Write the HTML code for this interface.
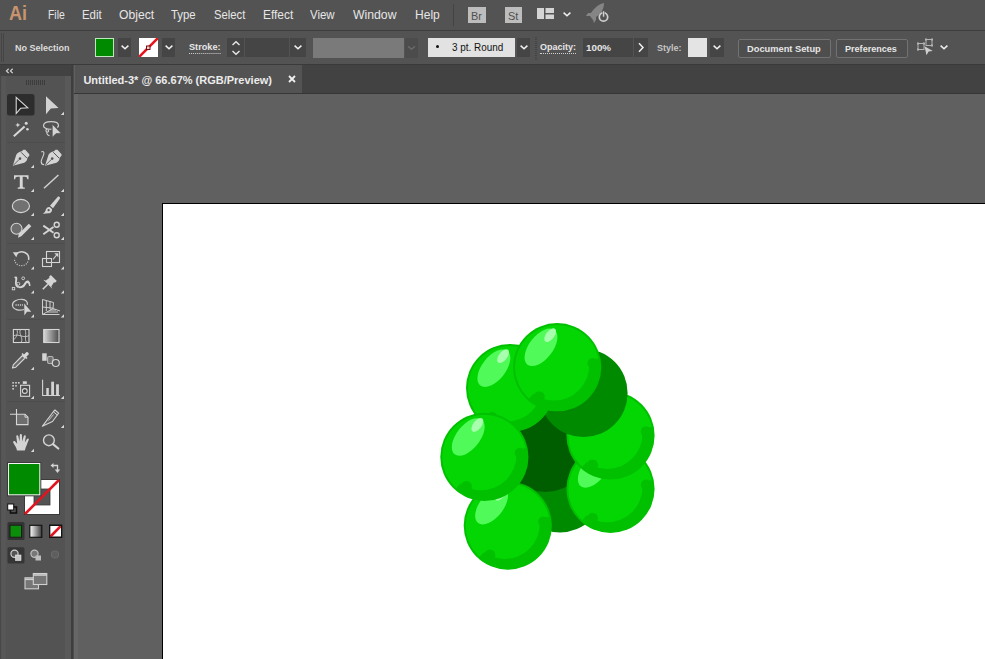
<!DOCTYPE html>
<html>
<head>
<meta charset="utf-8">
<title>Untitled-3* @ 66.67% (RGB/Preview)</title>
<style>
html,body{margin:0;padding:0;}
body{width:985px;height:659px;overflow:hidden;background:#606060;position:relative;font-family:"Liberation Sans",sans-serif;color:#e4e4e4;}
.abs{position:absolute;}
#menubar{left:0;top:0;width:985px;height:30px;background:#535353;}
#menubar .mi{position:absolute;top:6.700px;font-size:13px;line-height:16px;color:#e6e6e6;white-space:nowrap;transform-origin:0 0;}
#line1{left:0;top:30px;width:985px;height:1px;background:#3d3d3d;}
#ctrl{left:0;top:31px;width:985px;height:33px;background:#535353;}
#line2{left:0;top:64px;width:985px;height:1px;background:#3a3a3a;}
#tabbar{left:75px;top:65px;width:910px;height:28px;background:#424242;}
#tab{left:75px;top:65px;width:227px;height:28px;background:#535353;}
#tabline{left:74px;top:93px;width:911px;height:1px;background:#363636;}
#tools{left:0;top:65px;width:71px;height:594px;background:#535353;}
#toolhead{left:0;top:65px;width:72px;height:11px;background:#424242;}
#tooldiv{left:71px;top:65px;width:2px;height:594px;background:#3e3e3e;border-right:1px solid #4c4c4c;}
#canvas{left:74px;top:94px;width:911px;height:565px;background:#606060;}
#artboard{left:162px;top:203px;width:830px;height:460px;background:#fff;border:1px solid #000;}
.ctext{position:absolute;transform-origin:0 0;font-size:9px;font-weight:bold;line-height:12px;white-space:nowrap;color:#e6e6e6;}
.dd{position:absolute;background:#454545;}
.btn{border:1px solid #727272;background:#4e4e4e;border-radius:2px;}
</style>
</head>
<body>
<div id="menubar" class="abs">
  <span class="abs" id="ailogo" style="left:8.500px;top:1px;font-size:20px;line-height:24px;color:#c9936f;font-weight:bold;transform:scaleX(0.9);transform-origin:0 0;">Ai</span>
  <span class="mi" style="left:47.8px;transform:scaleX(0.802)">File</span>
  <span class="mi" style="left:82.4px;transform:scaleX(0.879)">Edit</span>
  <span class="mi" style="left:119.3px;transform:scaleX(0.934)">Object</span>
  <span class="mi" style="left:171.3px;transform:scaleX(0.873)">Type</span>
  <span class="mi" style="left:214.2px;transform:scaleX(0.866)">Select</span>
  <span class="mi" style="left:263.4px;transform:scaleX(0.915)">Effect</span>
  <span class="mi" style="left:310.3px;transform:scaleX(0.880)">View</span>
  <span class="mi" style="left:353.2px;transform:scaleX(0.941)">Window</span>
  <span class="mi" style="left:414.6px;transform:scaleX(0.927)">Help</span>
  <div class="abs" style="left:453px;top:4px;width:1px;height:22px;background:#444;"></div>
  <div class="abs" style="left:468px;top:7px;width:17.500px;height:16px;background:#bdbdbd;"></div>
  <span class="abs" style="left:470.500px;top:8.500px;font-size:11.500px;line-height:14px;color:#505050;transform:scaleX(.95);transform-origin:0 0;">Br</span>
  <div class="abs" style="left:504.500px;top:7px;width:17px;height:16px;background:#bdbdbd;"></div>
  <span class="abs" style="left:507.500px;top:8.500px;font-size:11.500px;line-height:14px;color:#505050;transform:scaleX(.95);transform-origin:0 0;">St</span>
  <svg class="abs" style="left:537px;top:8px" width="18" height="12" viewBox="0 0 18 12"><rect x="0" y="0" width="7" height="11" fill="#d4d4d4"/><rect x="8.500" y="0" width="8.500" height="5" fill="#d4d4d4"/><rect x="8.500" y="6.500" width="8.500" height="4.500" fill="#d4d4d4"/></svg>
  <svg class="abs" style="left:562px;top:11px" width="10" height="7" viewBox="0 0 10 7"><path d="M1.600 1.600 L5 4.800 L8.400 1.600" fill="none" stroke="#f0f0f0" stroke-width="1.500"/></svg>
  <svg class="abs" style="left:584px;top:1px" width="26" height="24" viewBox="0 0 26 24"><path d="M20 2 C15 3 10 7 7 12 L4 12 L2 15 L6 15 L9 19 L10 22 L12 19 L12 16 C17 13 20 8 20 2 Z" fill="#858585"/><circle cx="19.500" cy="16" r="4.200" fill="none" stroke="#d0d0d0" stroke-width="1.700"/><rect x="18.300" y="9.500" width="2.400" height="6.500" fill="#535353"/><rect x="18.800" y="10.200" width="1.500" height="5.500" fill="#d0d0d0"/></svg>
</div>
<div id="line1" class="abs"></div>
<div id="ctrl" class="abs">
  <div class="abs" style="left:1px;top:2px;width:4px;height:29px;background:repeating-linear-gradient(90deg,#454545 0 1px,#535353 1px 2px);"></div>
  <span class="ctext" style="left:15px;top:10.500px;color:#dcdcdc">No Selection</span>
  <div class="abs" style="left:95px;top:7px;width:17px;height:17px;background:#008a00;border:1px solid #bfe6bf;"></div>
  <div class="dd" style="left:118px;top:7px;width:13px;height:19px;"></div>
  <svg class="abs" style="left:120px;top:13px" width="10" height="7" viewBox="0 0 10 7"><path d="M1.600 1.600 L5 4.800 L8.400 1.600" fill="none" stroke="#f0f0f0" stroke-width="1.500"/></svg>
  <div class="abs" style="left:139px;top:7px;width:19px;height:19px;background:#fff;overflow:hidden;">
    <svg width="19" height="19" viewBox="0 0 19 19"><path d="M0 19 L19 0" stroke="#e8141c" stroke-width="2.600"/><rect x="7.500" y="8" width="3.500" height="3.500" fill="#f4d0d0" stroke="#7a0c10" stroke-width="1"/></svg>
  </div>
  <div class="dd" style="left:162px;top:7px;width:13px;height:19px;"></div>
  <svg class="abs" style="left:164px;top:13px" width="10" height="7" viewBox="0 0 10 7"><path d="M1.600 1.600 L5 4.800 L8.400 1.600" fill="none" stroke="#f0f0f0" stroke-width="1.500"/></svg>
  <span class="ctext" style="left:189px;top:11px;line-height:11px;border-bottom:1px dotted #d0d0d0;transform:scaleX(1.02)">Stroke:</span>
  <div class="dd" style="left:227px;top:7px;width:17px;height:19px;"></div>
  <svg class="abs" style="left:231px;top:9px" width="10" height="16" viewBox="0 0 10 16"><path d="M1.5 5 L5 1.8 L8.5 5 M1.5 11 L5 14.2 L8.5 11" fill="none" stroke="#e8e8e8" stroke-width="1.4"/></svg>
  <div class="dd" style="left:245px;top:7px;width:44px;height:19px;background:#454545"></div>
  <div class="dd" style="left:290px;top:7px;width:16px;height:19px;"></div>
  <svg class="abs" style="left:293px;top:13px" width="10" height="7" viewBox="0 0 10 7"><path d="M1.600 1.600 L5 4.800 L8.400 1.600" fill="none" stroke="#f0f0f0" stroke-width="1.500"/></svg>
  <div class="abs" style="left:313px;top:7px;width:91px;height:20px;background:#7a7a7a;"></div>
  <div class="dd" style="left:405px;top:7px;width:13px;height:20px;background:#4c4c4c"></div>
  <svg class="abs" style="left:407px;top:14px" width="9" height="6" viewBox="0 0 9 6"><path d="M1 1.2 L4.5 4.3 L8 1.2" fill="none" stroke="#6a6a6a" stroke-width="1.4"/></svg>
  <div class="abs" style="left:428px;top:7px;width:87px;height:19px;background:#e2e2e2;"></div>
  <div class="abs" style="left:436px;top:14px;width:3px;height:3px;border-radius:2px;background:#111;"></div>
  <span class="ctext" style="left:452px;top:11px;color:#111;font-weight:normal;font-size:10px;transform:scaleX(0.99)">3 pt. Round</span>
  <div class="dd" style="left:517px;top:7px;width:13px;height:19px;"></div>
  <svg class="abs" style="left:519px;top:13px" width="10" height="7" viewBox="0 0 10 7"><path d="M1.600 1.600 L5 4.800 L8.400 1.600" fill="none" stroke="#f0f0f0" stroke-width="1.500"/></svg>
  <div class="abs" style="left:535px;top:5px;width:2px;height:24px;background:repeating-linear-gradient(0deg,#444 0 1px,#535353 1px 2px);"></div>
  <span class="ctext" style="left:540px;top:11px;line-height:11px;border-bottom:1px dotted #d0d0d0">Opacity:</span>
  <div class="dd" style="left:583px;top:7px;width:50px;height:19px;background:#454545"></div>
  <span class="ctext" style="left:586px;top:10.5px;transform:scaleX(1.09)">100%</span>
  <div class="dd" style="left:634px;top:7px;width:14px;height:19px;"></div>
  <svg class="abs" style="left:637px;top:11px" width="8" height="11" viewBox="0 0 8 11"><path d="M2 1.2 L6 5.5 L2 9.8" fill="none" stroke="#f0f0f0" stroke-width="1.5"/></svg>
  <span class="ctext" style="left:657px;top:10.500px;color:#c6c6c6">Style:</span>
  <div class="abs" style="left:688px;top:7px;width:19px;height:19px;background:#e4e4e4;"></div>
  <div class="dd" style="left:710px;top:7px;width:14px;height:19px;"></div>
  <svg class="abs" style="left:712px;top:13px" width="10" height="7" viewBox="0 0 10 7"><path d="M1.600 1.600 L5 4.800 L8.400 1.600" fill="none" stroke="#f0f0f0" stroke-width="1.500"/></svg>
  <div class="abs btn" style="left:738px;top:8px;width:91px;height:17px;"></div>
  <span class="ctext" style="left:747px;top:11.5px;transform:scaleX(1.032)">Document Setup</span>
  <div class="abs btn" style="left:836px;top:8px;width:70px;height:17px;"></div>
  <span class="ctext" style="left:845px;top:11.5px;transform:scaleX(1.007)">Preferences</span>
  <svg class="abs" style="left:916px;top:7px" width="20" height="20" viewBox="0 0 20 20"><g fill="none" stroke="#b4b4b4" stroke-width="1"><rect x="2" y="5.500" width="6" height="6"/><rect x="10" y="1.500" width="6" height="6"/></g><g fill="#b4b4b4"><rect x="1" y="4.500" width="2" height="2"/><rect x="7" y="4.500" width="2" height="2"/><rect x="1" y="10.500" width="2" height="2"/><rect x="9" y="0.500" width="2" height="2"/><rect x="15" y="0.500" width="2" height="2"/><rect x="15" y="6.500" width="2" height="2"/></g><path d="M8.500 8.300 L16.800 13 L12.600 13.600 L10.500 17.200 Z" fill="#cfcfcf"/></svg>
  <svg class="abs" style="left:939px;top:13px" width="10" height="7" viewBox="0 0 10 7"><path d="M1.600 1.600 L5 4.800 L8.400 1.600" fill="none" stroke="#f0f0f0" stroke-width="1.500"/></svg>
</div>
<div id="line2" class="abs"></div>
<div id="tabbar" class="abs"></div>
<div id="tab" class="abs"></div>
<div id="tabline" class="abs"></div>
<span class="abs" id="tabtitle" style="left:83.4px;top:72.500px;font-size:11px;line-height:14px;font-weight:bold;color:#ececec;white-space:nowrap;transform-origin:0 0;">Untitled-3* @ 66.67% (RGB/Preview)</span>
<svg class="abs" style="left:288px;top:75px" width="8" height="8" viewBox="0 0 8 8"><path d="M1 1 L7 7 M7 1 L1 7" stroke="#f0f0f0" stroke-width="1.800" fill="none"/></svg>
<div id="canvas" class="abs"></div>
<div class="abs" style="left:74px;top:94px;width:4px;height:565px;background:#666666;"></div>
<div id="artboard" class="abs"></div>
<svg class="abs" id="art" style="left:420px;top:300px" width="260" height="290" viewBox="420 300 260 290">
<defs>
<clipPath id="bc"><circle cx="0" cy="0" r="42.200"/></clipPath>
<g id="ball">
<circle cx="0" cy="0" r="44.100" fill="#00c000"/>
<g clip-path="url(#bc)">
<path d="M0 0 L-66.900 74.300 L-100 0 L-70.700 -70.700 L0 -100 L70.700 -70.700 L97.800 -20.800 Z" fill="#04d604"/>
<circle cx="-3.200" cy="-1.800" r="35.200" fill="#04d604"/>
<circle cx="-18" cy="29.500" r="5.500" fill="#00c000"/>
<circle cx="35.500" cy="-4" r="5.200" fill="#00c000"/>
</g>
<ellipse cx="0" cy="0" rx="22" ry="11.800" transform="translate(-16.200 -19.900) rotate(-52)" fill="#50fa58"/>
<ellipse cx="0" cy="0" rx="8" ry="4.200" transform="translate(-7 -32) rotate(-52)" fill="#a8ffae"/>
</g>
</defs>
<circle cx="560" cy="488.300" r="44.100" fill="#008a00"/>
<circle cx="545" cy="448" r="44.100" fill="#005e00"/>
<use href="#ball" x="610.500" y="488.800"/>
<use href="#ball" x="610.500" y="435.500"/>
<use href="#ball" x="507.800" y="525.600"/>
<circle cx="583.500" cy="393" r="44.100" fill="#008a00"/>
<use href="#ball" x="510.100" y="388.100"/>
<use href="#ball" x="484.400" y="456.900"/>
<use href="#ball" x="557.200" y="367.200"/>
</svg>
<div id="tools" class="abs"></div>
<div id="toolhead" class="abs"></div>
<div id="tooldiv" class="abs"></div>
<svg class="abs" id="toolsvg" style="left:0;top:65px" width="72" height="594" viewBox="0 65 72 594">
<defs>
<path id="tri" d="M3.200 0 L3.200 3.200 L0 3.200 Z" fill="#d8d8d8"/>
<linearGradient id="gr1" x1="0" x2="1" y1="0" y2="0"><stop offset="0" stop-color="#d8d8d8"/><stop offset="1" stop-color="#4a4a4a"/></linearGradient>
<linearGradient id="gr2" x1="0" x2="1" y1="0" y2="0"><stop offset="0" stop-color="#ffffff"/><stop offset="1" stop-color="#3a3a3a"/></linearGradient>
<g id="pen"><path d="M0 15.500 L3.500 4.500 C4.500 2.800 6.500 1.500 9 1 L10.500 -0.500 L12.500 -0.500 L16.500 4 L16.500 5.500 L14.800 7.200 C14.500 9.500 13.500 11.500 11.500 12.500 Z" fill="#d4d4d4"/><path d="M8.300 2 L14.300 8" stroke="#535353" stroke-width="1"/><path d="M0.800 14.700 L6.500 9" stroke="#535353" stroke-width="0.900"/><circle cx="7.200" cy="8.300" r="1.300" fill="#535353"/></g>
</defs>
<rect x="0" y="76" width="1.200" height="583" fill="#484848"/><rect x="1.200" y="76" width="4.800" height="583" fill="#575757"/><rect x="65" y="76" width="6" height="583" fill="#595959"/>
<!-- header -->
<path d="M8.700 68.700 L6.500 70.900 L8.700 73.100 M12.700 68.700 L10.500 70.900 L12.700 73.100" fill="none" stroke="#d0d0d0" stroke-width="1.300"/>
<g stroke="#3c3c3c" stroke-width="1"><path d="M26.500 80 V85 M28.500 80 V85 M30.500 80 V85 M32.500 80 V85 M34.500 80 V85 M36.500 80 V85 M38.500 80 V85 M40.500 80 V85 M42.500 80 V85 M44.500 80 V85"/></g>
<!-- dividers -->
<g stroke="#4d4d4d" stroke-width="1"><path d="M7 142.500 H65 M7 243.500 H65 M7 319.500 H65 M7 401.500 H65"/></g>
<!-- row 1 -->
<rect x="7" y="94" width="27.500" height="21.500" rx="2.500" fill="#2d2d2d"/>
<path d="M16.200 97.300 L27.800 107.800 L20.600 108.300 L16.200 113.600 Z" fill="#1f1f1f" stroke="#d8d8d8" stroke-width="1.100" stroke-linejoin="miter"/>
<path d="M46 96.300 L58.600 108 L50.800 108.600 L46 114.300 Z" fill="#d2d2d2"/>
<use href="#tri" x="60.800" y="111.800"/>
<!-- row 2: wand, lasso -->
<path d="M13.800 136.300 L24.600 126.600" stroke="#d8d8d8" stroke-width="2" fill="none"/>
<path d="M17.800 122.500 L18.500 124.300 L20.300 125 L18.500 125.700 L17.800 127.500 L17.100 125.700 L15.300 125 L17.100 124.300 Z" fill="#d8d8d8"/>
<circle cx="26.200" cy="123.200" r="1.500" fill="#d8d8d8"/><circle cx="27.400" cy="129.300" r="1.300" fill="#d8d8d8"/>
<path d="M51.500 129.200 C46.500 129.500 43.300 127.800 43.500 125.500 C43.800 123 47 121.700 51 121.700 C55.500 121.700 58.500 123.200 58.500 125.400 C58.500 126.300 58 127 57.300 127.500" fill="none" stroke="#d2d2d2" stroke-width="1.200"/>
<path d="M47 128.800 C45.500 129.800 45.600 131.800 47.200 132 C48.800 132.200 49.300 130 47.600 129.600 M47 132 C46.500 133.500 47.500 135 49.500 135.800" fill="none" stroke="#d2d2d2" stroke-width="1.100"/>
<path d="M52.300 124.300 L61 133.300 L56 133.600 L52.300 137.300 Z" fill="#d4d4d4" stroke="#535353" stroke-width="0.600"/>
<!-- row 3: pen, curvature -->
<use href="#pen" x="12.800" y="150.300"/>
<use href="#tri" x="30.800" y="164.800"/>
<use href="#pen" x="45" y="150.300"/>
<path d="M41.300 152 C43.300 150.800 44.300 152.300 43.800 154.200 C43.200 156.500 41.200 159.500 41.200 161.800 C41.200 163.800 42.800 164.800 44.200 164.800" fill="none" stroke="#d2d2d2" stroke-width="1.100"/>
<!-- row 4: T, line -->
<path d="M14 175.300 H28.500 V179.300 H27.300 C27.100 177.500 26.500 176.800 25 176.800 H22.700 V186.300 C22.700 187.300 23.300 187.600 24.800 187.600 V188.800 H17.700 V187.600 C19.200 187.600 19.800 187.300 19.800 186.300 V176.800 H17.500 C16 176.800 15.400 177.500 15.200 179.300 H14 Z" fill="#d6d6d6"/>
<use href="#tri" x="30.800" y="188.800"/>
<path d="M44 188.300 L58.400 175" stroke="#d2d2d2" stroke-width="1.500"/>
<use href="#tri" x="60.800" y="188.800"/>
<!-- row 5: ellipse, brush -->
<ellipse cx="20.900" cy="206" rx="8.600" ry="6.600" fill="#717171" stroke="#d6d6d6" stroke-width="1.100"/>
<use href="#tri" x="30.800" y="212.800"/>
<path d="M50 205.800 L57.600 197 C58.800 195.800 60.600 197.300 59.800 198.700 L53 208.300 Z" fill="#d4d4d4"/>
<path d="M49.600 207 L51.900 208.900 C52.600 211 50.800 213 48.500 213.300 C46.300 213.700 44 213.900 42.800 213.700 C44.800 212.700 45.300 211.300 45.800 209.800 C46.300 208 47.800 206.700 49.600 207 Z" fill="#d4d4d4"/>
<circle cx="48.600" cy="210.200" r="1.100" fill="#535353"/>
<use href="#tri" x="60.800" y="212.800"/>
<!-- row 6: shaper, scissors -->
<circle cx="16.500" cy="228.800" r="5.500" fill="#6d6d6d" stroke="#d4d4d4" stroke-width="1.100"/>
<path d="M18 237.700 L18.800 233.800 L28.800 223.800 L31.300 226.300 L21.300 236.300 Z" fill="#d4d4d4"/>
<use href="#tri" x="30.800" y="236.800"/>
<path d="M43.300 225.600 L53.500 232.800 M43.300 234.300 L53.500 227" stroke="#d4d4d4" stroke-width="1.900" fill="none"/>
<circle cx="56.700" cy="224.800" r="2.500" fill="none" stroke="#d4d4d4" stroke-width="1.400"/>
<circle cx="56.700" cy="235.200" r="2.500" fill="none" stroke="#d4d4d4" stroke-width="1.400"/>
<use href="#tri" x="60.800" y="236.800"/>
<!-- row 7: rotate, scale -->
<path d="M16.500 254 C18.500 251.800 22 251.300 24.800 252.500 C27.800 253.800 29.200 257 28.500 260" fill="none" stroke="#d4d4d4" stroke-width="1.500"/>
<path d="M12.800 252.300 L18.300 252.300 L16.300 257.300 Z" fill="#d4d4d4"/>
<path d="M28 261.500 C26.500 265 22.500 266.500 19 265.300 C16 264.200 14.300 261.500 14.500 258.500" fill="none" stroke="#bdbdbd" stroke-width="1.200" stroke-dasharray="1.200 1.200"/>
<use href="#tri" x="30.800" y="266.300"/>
<rect x="46.500" y="251.500" width="13" height="11" fill="none" stroke="#d4d4d4" stroke-width="1.100"/>
<rect x="42.500" y="258.500" width="9" height="8" fill="none" stroke="#d4d4d4" stroke-width="1.100"/>
<path d="M53 259.500 L57 254.500" stroke="#d4d4d4" stroke-width="1.200"/><path d="M54.300 253.300 H58.300 V257.300 Z" fill="#d4d4d4"/>
<use href="#tri" x="60.800" y="266.300"/>
<!-- row 8: width, pin -->
<path d="M14 277 C15.500 276 17.300 276.300 17.300 278 C17.300 280.500 16 283.500 17.800 285.500 C19.500 287.300 22.500 286 24 283.500 C25.500 281 27.300 280 28.800 281 C30.300 282 30.300 284 30.500 286 L29 286 C28.800 284.500 28.500 283 27.500 283 C26.300 283 25.800 285 24.500 286.500 C22.500 288.500 18.500 288.800 16.500 287 C14 284.800 15.500 280.500 15.300 278.500 Z" fill="#d4d4d4"/>
<circle cx="18.300" cy="283.800" r="1.500" fill="#535353" stroke="#d4d4d4" stroke-width="0.900"/>
<circle cx="23.200" cy="278.300" r="1.400" fill="#535353" stroke="#d4d4d4" stroke-width="0.900"/>
<rect x="12.300" y="287.400" width="2.400" height="2.400" fill="#535353" stroke="#d4d4d4" stroke-width="0.900"/>
<use href="#tri" x="30.800" y="290.300"/>
<path d="M50.800 275 L56.800 281 L55 282.800 L54 282.300 L51.300 286.500 L52.300 288.800 L43.300 279.800 L45.800 280.500 L49.500 277.800 L49 276.800 Z" fill="#d4d4d4"/>
<path d="M42.800 289.300 L47.800 284.300" stroke="#d4d4d4" stroke-width="1.600"/>
<use href="#tri" x="60.800" y="290.300"/>
<!-- row 9: shape builder, perspective -->
<path d="M24 309.500 C19 311 13 309.500 12.500 305.500 C12 301.500 17.500 299 22 299.300 C26 299.600 28 302 27.300 304.800" fill="none" stroke="#d0d0d0" stroke-width="1.200"/>
<path d="M15.500 305 H23" stroke="#d0d0d0" stroke-width="1.300" stroke-dasharray="1.200 1"/>
<path d="M24.200 303.500 L31.300 311.800 L27 311.800 L24.400 315.600 Z" fill="#d4d4d4"/>
<use href="#tri" x="30.800" y="314.300"/>
<path d="M42.500 299.500 V314.500 H59.500 M42.500 299.500 L53.500 302.500 L53 308.500 M42.500 307 L53.200 308.200 M46.300 300.500 V311 M50 301.500 V309 M42.500 314.500 L53 308.500 L60 311 M47 312 H58 M50 310 H56" fill="none" stroke="#cfcfcf" stroke-width="1"/>
<use href="#tri" x="60.800" y="314.300"/>
<!-- row 10: mesh, gradient -->
<rect x="13.400" y="329.500" width="15.600" height="13" fill="#4a4a4a" stroke="#d6d6d6" stroke-width="1.100"/>
<path d="M13.500 336 C18 333 24 339 29 335.500 M20.500 329.500 C18 334 24 338 21 342.500 M13.500 340 C17 337 18 333 17 329.500 M25 329.500 C27 334 24 339 26.500 342.500" fill="none" stroke="#c8c8c8" stroke-width="0.900"/>
<rect x="43.700" y="329.500" width="15.300" height="13" fill="url(#gr1)" stroke="#d6d6d6" stroke-width="1.100"/>
<!-- row 11: eyedropper, blend -->
<path d="M12.500 368 L13.300 364.800 L22.500 355.500 L25 358 L15.800 367.200 Z" fill="#6a6a6a" stroke="#d6d6d6" stroke-width="1.100" stroke-linejoin="round"/>
<path d="M21.500 354 L26.500 359 L27.500 358 L26.300 356.800 L28.600 354.500 C29.600 353.500 27.300 351.300 26.300 352.300 L24 354.600 L22.600 353.100 Z" fill="#d8d8d8"/>
<use href="#tri" x="30.800" y="366.800"/>
<rect x="42.200" y="353.300" width="4.500" height="7.500" fill="#d4d4d4"/>
<rect x="47.600" y="356.500" width="5.500" height="7" rx="1.500" fill="#707070" stroke="#b8b8b8" stroke-width="1.100"/>
<circle cx="55.800" cy="363" r="3.500" fill="#5a5a5a" stroke="#d4d4d4" stroke-width="1.200"/>
<!-- row 12: sprayer, graph -->
<rect x="20.600" y="385.300" width="9" height="11" fill="#4e4e4e" stroke="#d6d6d6" stroke-width="1.100"/>
<rect x="22.800" y="381.300" width="4" height="2.600" fill="#d6d6d6"/>
<circle cx="24.800" cy="391" r="2.400" fill="#3e3e3e" stroke="#d6d6d6" stroke-width="1.100"/>
<g fill="#cfcfcf"><rect x="12.300" y="382" width="1.600" height="1.600"/><rect x="15.200" y="382" width="1.600" height="1.600"/><rect x="18" y="382" width="1.600" height="1.600"/><rect x="12.300" y="385" width="1.600" height="1.600"/><rect x="15.200" y="385" width="1.600" height="1.600"/><rect x="12.300" y="388" width="1.600" height="1.600"/></g>
<use href="#tri" x="30.800" y="395.800"/>
<path d="M42.600 379.700 V395.500 H60" fill="none" stroke="#d4d4d4" stroke-width="1.100"/>
<rect x="46.300" y="388" width="2.500" height="7" fill="#d4d4d4"/><rect x="51.200" y="381.700" width="2.800" height="13.300" fill="#d4d4d4"/><rect x="56.100" y="384.300" width="2.800" height="10.700" fill="#d4d4d4"/>
<use href="#tri" x="60.800" y="395.800"/>
<!-- row 13: artboard, slice -->
<path d="M16.500 414.200 H25 L28 417.200 V424.600 H16.500 Z" fill="#6e6e6e" stroke="#d6d6d6" stroke-width="1.100"/>
<path d="M25 414.200 V417.200 H28" fill="none" stroke="#d6d6d6" stroke-width="1"/>
<path d="M16.500 409 V414 M10 414.200 H16.500" stroke="#d6d6d6" stroke-width="1.100" fill="none"/>
<path d="M42.300 426.300 L53.500 411.500 L55 410 L58.600 413.200 L57.300 415 L52.500 421.500 Z" fill="#5c5c5c" stroke="#d4d4d4" stroke-width="1.100" stroke-linejoin="round"/>
<path d="M53.300 411.700 L57.300 415" stroke="#d4d4d4" stroke-width="1"/>
<path d="M48.500 420.500 L53.500 414.500" stroke="#d4d4d4" stroke-width="0.800"/>
<use href="#tri" x="60.800" y="424.800"/>
<!-- row 14: hand, zoom -->
<path d="M17 450.500 C16.500 447.500 14.500 445 13.200 442.500 C12.800 441.300 14 440.500 15 441.300 L17.200 443.800 L16.300 436.500 C16.200 435 18 434.700 18.300 436.200 L19.500 441.500 L19.800 435 C19.900 433.500 21.800 433.500 21.900 435 L22.200 441.500 L23.800 436 C24.200 434.600 26 435 25.800 436.500 L24.800 442.500 L27 439 C27.800 437.800 29.300 438.600 28.700 440 C27.500 443 26 446.500 24.800 450.500 Z" fill="#d4d4d4"/>
<use href="#tri" x="30.800" y="448.800"/>
<circle cx="48.900" cy="440.300" r="5.400" fill="#5a5a5a" stroke="#d4d4d4" stroke-width="1.400"/>
<path d="M53 444.200 L58.300 448.500" stroke="#d4d4d4" stroke-width="2.200" stroke-linecap="round"/>
<!-- fill / stroke -->
<rect x="24.500" y="479.500" width="35" height="35" fill="#fff" stroke="#3a3a3a" stroke-width="1"/>
<rect x="34" y="489" width="16" height="16" fill="#535353" stroke="#3a3a3a" stroke-width="0.800"/>
<path d="M25 514 L59 480" stroke="#e01520" stroke-width="2.600"/>
<rect x="7" y="462" width="34.300" height="34.300" fill="#3a3a3a"/>
<rect x="8" y="463" width="32.300" height="32.300" fill="#f4f4f4"/>
<rect x="9" y="464" width="30.300" height="30.300" fill="#008a00"/>
<path d="M52.500 465.500 H57.500 V470" fill="none" stroke="#d4d4d4" stroke-width="1.300"/>
<path d="M54.800 469.500 H60.200 L57.500 473 Z" fill="#d4d4d4"/><path d="M53.500 463 V468 L50.500 465.500 Z" fill="#d4d4d4"/>
<rect x="10.500" y="507" width="6" height="6" fill="#535353" stroke="#111" stroke-width="1.600"/>
<rect x="7.700" y="504" width="6" height="6" fill="#fff" stroke="#111" stroke-width="1"/>
<!-- color / gradient / none -->
<rect x="7.500" y="522" width="17" height="18" rx="1.500" fill="#333"/>
<rect x="10" y="525.200" width="11.500" height="12" fill="#0b8f0b" stroke="#1b1b1b" stroke-width="1"/>
<rect x="29.800" y="525.300" width="12" height="12" fill="url(#gr2)" stroke="#151515" stroke-width="1.200"/>
<rect x="49.600" y="525.300" width="12" height="12" fill="#fff" stroke="#151515" stroke-width="1.200"/>
<path d="M50.500 536.500 L60.700 526.200" stroke="#e01520" stroke-width="2.600"/>
<rect x="49.600" y="525.300" width="12" height="12" fill="none" stroke="#151515" stroke-width="1.200"/>
<!-- draw modes -->
<rect x="7.500" y="547.300" width="17" height="16.200" rx="1.500" fill="#363636"/>
<circle cx="14.500" cy="553.800" r="3.600" fill="#555" stroke="#d0d0d0" stroke-width="1.200"/><rect x="15.500" y="555" width="5.500" height="5.500" fill="#c8c8c8" stroke="#e8e8e8" stroke-width="0.600"/>
<circle cx="34.500" cy="553.800" r="3.600" fill="#777" stroke="#c0c0c0" stroke-width="1.200"/><rect x="35.500" y="555.500" width="5.500" height="5" fill="#bdbdbd"/>
<circle cx="55" cy="554.500" r="3.500" fill="#5e5e5e" stroke="#6a6a6a" stroke-width="1.200"/>
<!-- screen mode -->
<rect x="25" y="577.800" width="13.500" height="11" fill="#767676" stroke="#d0d0d0" stroke-width="1.100"/><path d="M25 579.300 H38.500" stroke="#d0d0d0" stroke-width="1.600"/>
<rect x="33.300" y="573.500" width="13.500" height="11" fill="#767676" stroke="#d0d0d0" stroke-width="1.100"/><path d="M33.300 575 H46.800" stroke="#d0d0d0" stroke-width="1.600"/>
</svg>

</body>
</html>
